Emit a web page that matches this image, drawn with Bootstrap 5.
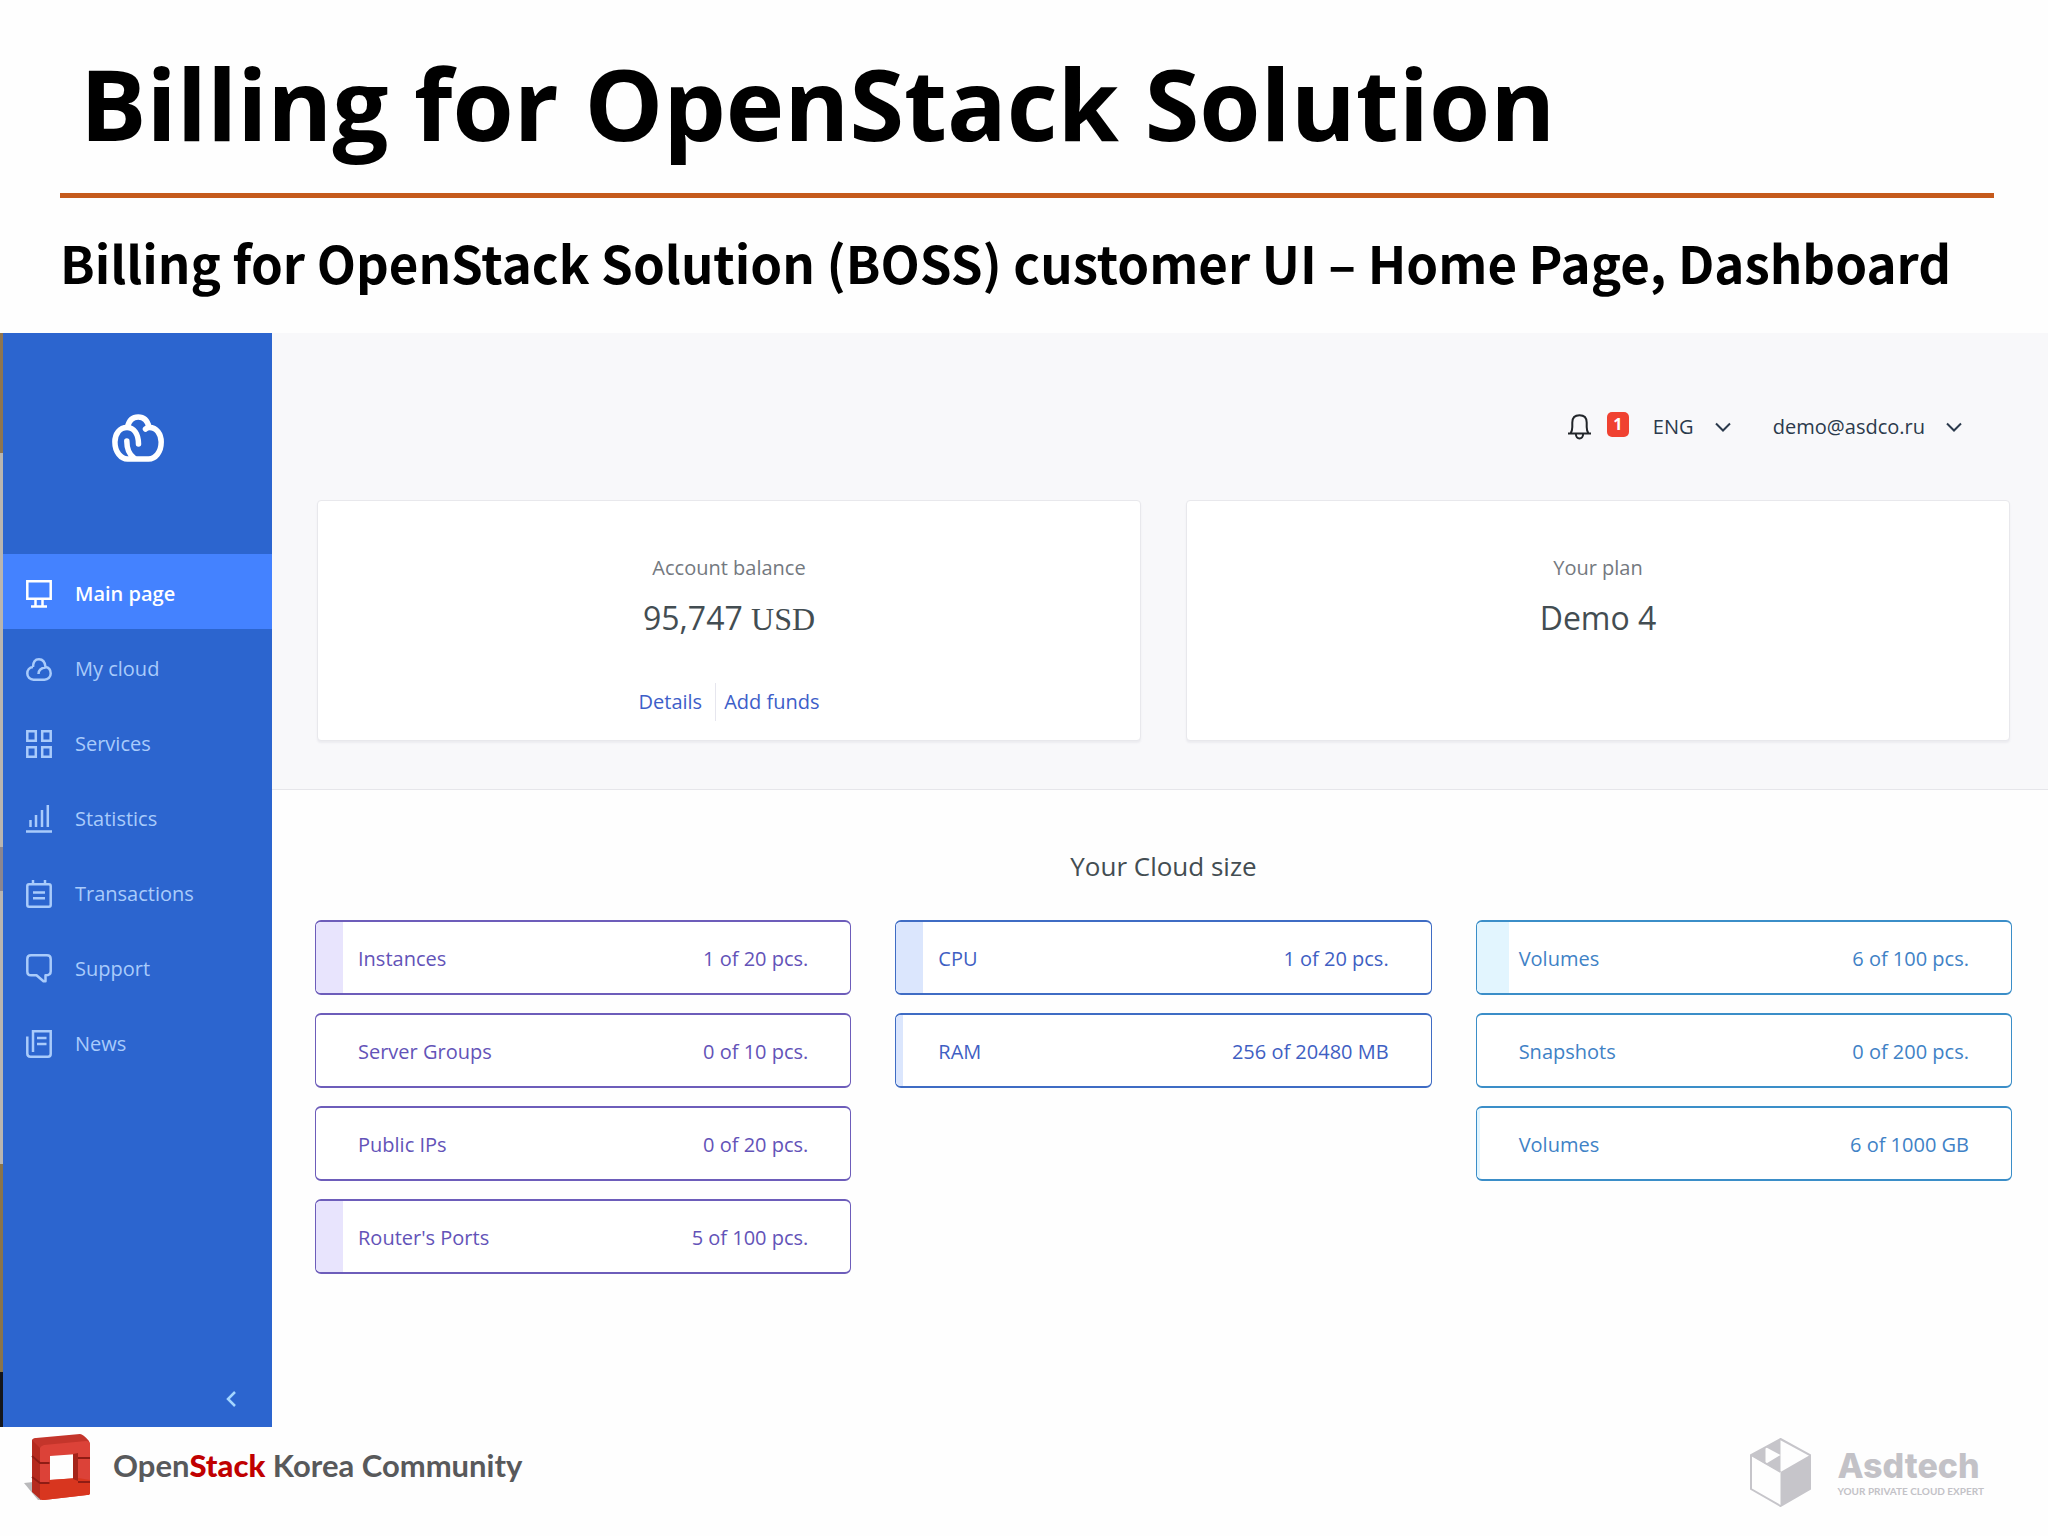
<!DOCTYPE html>
<html lang="en">
<head>
<meta charset="utf-8">
<meta name="viewport" content="width=device-width, initial-scale=1">
<title>Billing for OpenStack Solution</title>
<link href="https://cdn.jsdelivr.net/npm/bootstrap@5.3.0/dist/css/bootstrap.min.css" rel="stylesheet">
<style>
  body { font-family: "Open Sans", "Noto Sans", sans-serif; font-size: 20px; line-height: 28px; color: #2c3e50; background: #fefefe; }
  svg { display: block; flex: none; fill: none; }

  /* Slide heading */
  .slide-head { padding: 43px 54px 35px 60px; }
  .slide-title { font-size: 99px; line-height: 120px; font-weight: 700; color: #000; margin: 0 0 30px; padding-left: 20px; }
  .slide-rule { height: 5px; background: #c55a1c; }
  .slide-sub { font-family: "Noto Sans CJK KR", "Noto Sans", sans-serif; font-size: 51px; line-height: 72px; font-weight: 700; color: #000; margin: 28px 0 0; }

  /* Sidebar */
  .edge-strip { width: 3px; background: linear-gradient(#8f7550 0 11%, #b9b5b0 11% 47%, #8b8690 47% 51%, #b9b5b0 51% 76%, #8a744a 76% 95%, #14161c 95%); }
  .side { width: 269px; background: #2c65cf; }
  .brand { padding: 81px 0 92px; }
  .side .nav-link { height: 75px; padding: 4px 23px 0; gap: 23px; color: #a9cbfb; font-size: 20px; border-radius: 0; }
  .side .nav-link.active { background: #4482ff; color: #fff; font-weight: 600; }
  .side svg { stroke: currentColor; stroke-width: 2.5; }
  .collapse-btn { padding: 0 36px 20px 0; color: #a4d6ff; }

  /* Main area */
  .overview { background: #f8f8fa; border-bottom: 1px solid #e6e6ea; padding: 74px 38px 48px 45px; }
  .tools { height: 40px; margin-bottom: 53px; padding-right: 48px; gap: 42px; color: #2b3a4c; }
  .tools select { appearance: none; border: 0; padding: 0; background: none; color: inherit; }
  .tools svg { stroke: currentColor; stroke-width: 2; pointer-events: none; }
  .picker { gap: 21px; }
  .count-badge { font-size: 16px; line-height: 25px; width: 22px; height: 25px; padding: 0; border-radius: 5px; background: #f04231; color: #fff; }
  .tile-row { display: grid; grid-template-columns: 1fr 1fr; gap: 45px; }
  .tile { border: 1px solid #e8e8ec; border-radius: 4px; background: #fff; box-shadow: 0 2px 2px #ececf0; padding: 53px 20px 19px; text-align: center; }
  .tile-label { color: #74797f; }
  .tile-value { font-size: 32px; line-height: 44px; margin: 14px 0 42px; color: #434d52; }
  .currency { font-family: "Liberation Serif", serif; }
  .tile-links { height: 38px; }
  .tile-links a { color: #3d5ec9; text-decoration: none; }
  .tile-links a + a { border-left: 1px solid #e6e6ee; margin-left: 13px; padding-left: 8px; line-height: 38px; }

  .sizes { padding: 58px 36px 60px 43px; }
  .sizes h2 { font-size: 26px; line-height: 36px; font-weight: 400; color: #434d52; margin: 0 0 36px; text-align: center; }
  .quota-grid { display: grid; grid-template-columns: repeat(3, 1fr); gap: 44px; align-items: start; }
  .quota-col { display: grid; gap: 18px; }
  .quota { position: relative; height: 75px; padding: 2px 42px 0; border: solid var(--line); border-width: 2px 1px; border-radius: 6px; color: var(--ink); background: #fff; overflow: hidden; }
  .quota-fill { position: absolute; top: 0; bottom: 0; left: 0; background: var(--tint); }
  .quota span { position: relative; }
  .violet { --line: #6d5dba; --ink: #6353b8; --tint: #e8e4fd; }
  .indigo { --line: #3f6cc4; --ink: #3f5fc3; --tint: #dbe6fd; }
  .azure { --line: #3b8ec8; --ink: #3f82c6; --tint: #e2f5fe; }

  /* Slide footer */
  .slide-foot { padding: 7px 64px 29px 24px; }
  .community { gap: 22px; font-family: Lato, sans-serif; font-size: 31px; line-height: 40px; font-weight: 700; color: #58595b; }
  .community b { color: #c00000; }
  .vendor { gap: 26px; color: #c3c2c7; }
  .vendor-name { font-family: Inter, sans-serif; font-size: 34px; line-height: 36px; font-weight: 800; }
  .vendor-tag { font-family: Lato, sans-serif; font-size: 10px; line-height: 14px; font-weight: 700; }
</style>
</head>
<body class="d-flex flex-column min-vh-100">
<header class="slide-head">
  <h1 class="slide-title">Billing for OpenStack Solution</h1>
  <div class="slide-rule"></div>
  <p class="slide-sub">Billing for OpenStack Solution (BOSS) customer UI – Home Page, Dashboard</p>
</header>

<div class="d-flex flex-grow-1">
  <div class="edge-strip"></div>
  <aside class="side d-flex flex-column flex-shrink-0">
    <a class="brand d-flex justify-content-center text-white" href="#" aria-label="Home">
      <svg width="52" height="48" viewBox="0 0 52 48" style="stroke-width:5.5" stroke-linecap="round">
        <path d="M26.500 30C26.500 20 22 13.500 15 13.500C7.500 13.500 2.900 20 2.900 28C2.900 38 9 45 15.500 45H36.500C43.500 45 49.200 38 49.200 28C49.200 20 44.500 13.500 37.500 13.500C36 13.500 34.500 14 33.500 15"/>
        <path d="M14.800 27C14.800 35 16.500 40 22 44M15.500 13C17 6 20.500 2.900 26.200 2.900C32 2.900 35.500 6.500 37 13"/>
      </svg>
    </a>
    <nav class="nav flex-column flex-nowrap">
      <a class="nav-link active d-flex align-items-center" href="#" aria-current="page">
        <svg width="26" height="28" viewBox="0 0 26 28"><path d="M1.300 1.300H24.700V18.700H1.300ZM9.500 19V25.500M16.500 19V25.500M5 26.500H21"/></svg>Main page</a>
      <a class="nav-link d-flex align-items-center" href="#">
        <svg width="26" height="24" viewBox="0 -1 26 24"><path d="M7 9C7 4 9 1.300 13 1.300C17 1.300 19 4 19.500 9C23 9.500 24.700 12 24.700 15.500C24.700 19 22 21.700 18.500 21.700H7.500C4 21.700 1.300 19 1.300 15.500C1.300 12 3.500 9.300 7 9M12.500 16C12.500 12 15 10 19.500 9.500"/></svg>My cloud</a>
      <a class="nav-link d-flex align-items-center" href="#">
        <svg width="26" height="28" viewBox="0 0 26 28"><path d="M1.300 1.300H9.800V10.800H1.300ZM16.200 1.300H24.700V10.800H16.200ZM1.300 17.200H9.800V26.700H1.300ZM16.200 17.200H24.700V26.700H16.200Z"/></svg>Services</a>
      <a class="nav-link d-flex align-items-center" href="#">
        <svg width="26" height="28" viewBox="0 0 26 28"><path d="M0 26.500H26M4.500 22V15M10 22V10M16 22V5M21.800 22V0"/></svg>Statistics</a>
      <a class="nav-link d-flex align-items-center" href="#">
        <svg width="26" height="28" viewBox="0 0 26 28"><path d="M3 4.300H23Q24.700 4.300 24.700 6V25Q24.700 26.700 23 26.700H3Q1.300 26.700 1.300 25V6Q1.300 4.300 3 4.300ZM7 0V5M19 0V5M7 12.500H19M7 18.200H19"/></svg>Transactions</a>
      <a class="nav-link d-flex align-items-center" href="#">
        <svg width="26" height="29" viewBox="0 0 26 29" stroke-linejoin="round"><path d="M5 1.300H21Q24.700 1.300 24.700 5V17.500Q24.700 21.300 19.500 21.300V27.300H17.500L10.500 21.300H5Q1.300 21.300 1.300 17.500V5Q1.300 1.300 5 1.300Z"/></svg>Support</a>
      <a class="nav-link d-flex align-items-center" href="#">
        <svg width="26" height="28" viewBox="0 0 26 28"><path d="M7 22V1.300H24.700V24Q24.700 26.700 22 26.700H4.500Q1.300 26.700 1.300 23.500V6.500M11 8H20.500M11 14H20.500"/></svg>News</a>
    </nav>
    <button type="button" class="collapse-btn btn border-0 mt-auto ms-auto" aria-label="Collapse menu">
      <svg width="10" height="16" viewBox="0 0 10 16"><path d="M9 1L2 8L9 15"/></svg>
    </button>
  </aside>

  <main class="flex-grow-1">
    <section class="overview">
      <div class="tools d-flex align-items-center justify-content-end">
        <div class="d-flex align-items-center">
          <button type="button" class="btn border-0 p-0 d-flex align-items-center" aria-label="Notifications">
            <svg width="23" height="26" viewBox="0 0 23 26"><path d="M0 19.500H23M2.500 19.500Q4.300 17 4.300 13V8.500C4.300 4 7 1.200 11.500 1.200C16 1.200 18.700 4 18.700 8.500V13Q18.700 17 20.500 19.500M7.800 20Q8.200 24.500 11.500 24.500Q14.800 24.500 15.200 20"/></svg>
            <span class="count-badge badge ms-3 mb-1">1</span>
          </button>
          <label class="picker d-flex align-items-center ms-4">
            <select aria-label="Language"><option>ENG</option></select>
            <svg width="16" height="10" viewBox="0 0 16 10"><path d="M1 1.500L8 8.500L15 1.500"/></svg>
          </label>
        </div>
        <a class="picker d-flex align-items-center text-reset text-decoration-none" href="#">demo@asdco.ru
          <svg width="16" height="10" viewBox="0 0 16 10"><path d="M1 1.500L8 8.500L15 1.500"/></svg>
        </a>
      </div>
      <div class="tile-row">
        <div class="tile">
          <div class="tile-label">Account balance</div>
          <div class="tile-value">95,747 <span class="currency">USD</span></div>
          <div class="tile-links d-flex justify-content-center align-items-center"><a href="#">Details</a><a href="#">Add funds</a></div>
        </div>
        <div class="tile">
          <div class="tile-label">Your plan</div>
          <div class="tile-value">Demo 4</div>
        </div>
      </div>
    </section>

    <section class="sizes">
      <h2>Your Cloud size</h2>
      <div class="quota-grid">
        <div class="quota-col violet">
          <div class="quota d-flex align-items-center justify-content-between"><div class="quota-fill" style="width:5%"></div><span>Instances</span><span>1 of 20 pcs.</span></div>
          <div class="quota d-flex align-items-center justify-content-between"><span>Server Groups</span><span>0 of 10 pcs.</span></div>
          <div class="quota d-flex align-items-center justify-content-between"><span>Public IPs</span><span>0 of 20 pcs.</span></div>
          <div class="quota d-flex align-items-center justify-content-between"><div class="quota-fill" style="width:5%"></div><span>Router's Ports</span><span>5 of 100 pcs.</span></div>
        </div>
        <div class="quota-col indigo">
          <div class="quota d-flex align-items-center justify-content-between"><div class="quota-fill" style="width:5%"></div><span>CPU</span><span>1 of 20 pcs.</span></div>
          <div class="quota d-flex align-items-center justify-content-between"><div class="quota-fill" style="width:1.25%"></div><span>RAM</span><span>256 of 20480 MB</span></div>
        </div>
        <div class="quota-col azure">
          <div class="quota d-flex align-items-center justify-content-between"><div class="quota-fill" style="width:6%"></div><span>Volumes</span><span>6 of 100 pcs.</span></div>
          <div class="quota d-flex align-items-center justify-content-between"><span>Snapshots</span><span>0 of 200 pcs.</span></div>
          <div class="quota d-flex align-items-center justify-content-between"><div class="quota-fill" style="width:0.6%"></div><span>Volumes</span><span>6 of 1000 GB</span></div>
        </div>
      </div>
    </section>
  </main>
</div>

<footer class="slide-foot d-flex justify-content-between align-items-start">
  <div class="community d-flex align-items-center">
    <svg width="67" height="66" viewBox="0 0 67 66">
      <path fill="#b9b9bb" d="M0 49L9 48L17 66L14 66Z"/>
      <path fill="#b52a1e" d="M8 6Q9 5 12 4L17 14V66L8 58Z"/>
      <path fill="#c4352b" d="M8 6Q9 4 12 4L56 0Q59 0 65 7L66 11L16 14Z"/>
      <path fill="#dc4238" fill-rule="evenodd" d="M16 14Q17 12 20 11L62 7Q66 7 66 10V59Q66 61 63 61L20 66Q16 66 16 64ZM26 22V46L54 44V20Z"/>
      <path fill="#d8361f" d="M16 49L25 48V46L54 44L66 46V59Q66 61 63 61L20 66Q16 66 16 64Z"/>
      <path fill="#a5241a" d="M49 20L54 19V47L49 45Z"/>
      <path stroke="#8f1c14" stroke-width="1.800" d="M8 22L16 29H25.500M54 24H66M8 43L16 49H25.500M54 48H66"/>
    </svg>
    <div class="pb-1">Open<b>Stack</b> Korea Community</div>
  </div>
  <div class="vendor d-flex align-items-center pt-1">
    <svg width="61" height="69" viewBox="0 0 61 69">
      <path fill="#c6c5ca" d="M60 17V51L30.500 68V34ZM1 17L15.500 9V26ZM15.500 9L30.500 1V17ZM15.500 26L30.500 17V34Z"/>
      <path stroke="#c6c5ca" stroke-width="2" d="M30.500 1L60 17V51L30.500 68L1 51V17Z M1 17L30.500 34"/>
    </svg>
    <div><div class="vendor-name">Asdtech</div><div class="vendor-tag">YOUR PRIVATE CLOUD EXPERT</div></div>
  </div>
</footer>
<script src="https://cdn.jsdelivr.net/npm/bootstrap@5.3.0/dist/js/bootstrap.bundle.min.js"></script>
</body>
</html>
